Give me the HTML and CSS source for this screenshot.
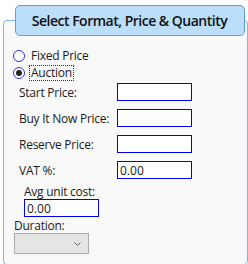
FILE: index.html
```html
<!DOCTYPE html>
<html lang="en">
<head>
    <meta charset="UTF-8">
    <title>Select Format</title>
    <link rel="stylesheet" href="styles.css">
</head>
<body>
    <fieldset class="group">
        <legend class="group-title">Select Format, Price &amp; Quantity</legend>

        <div class="formats">
            <label class="radio-row">
                <input type="radio" name="format" class="radio">
                <span class="radio-text">Fixed Price</span>
            </label>
            <label class="radio-row">
                <input type="radio" name="format" class="radio" checked>
                <span class="radio-text focused">Auction</span>
            </label>
        </div>

        <div class="prices">
            <div class="field">
                <span class="field-label">Start Price:</span>
                <input type="text" class="box">
            </div>
            <div class="field">
                <span class="field-label">Buy It Now Price:</span>
                <input type="text" class="box">
            </div>
            <div class="field">
                <span class="field-label">Reserve Price:</span>
                <input type="text" class="box">
            </div>
            <div class="field">
                <span class="field-label">VAT %:</span>
                <input type="text" class="box" value="0.00">
            </div>
        </div>

        <div class="avg">
            <div class="stack-label">Avg unit cost:</div>
            <input type="text" class="box" value="0.00">
        </div>

        <div class="duration">
            <div class="stack-label">Duration:</div>
            <div class="combo">
                <svg width="7" height="4" viewBox="0 0 7 4">
                    <path d="M0.5 0.5 L3.5 3.5 L6.5 0.5" fill="none" stroke="#606060" stroke-width="1"/>
                </svg>
            </div>
        </div>
    </fieldset>
</body>
</html>
```

FILE: styles.css
```css
body {
    margin: 0;
    padding: 5px 0 0 3px;
    background: #ffffff;
    font-family: "Open Sans", "Noto Sans", sans-serif;
    font-size: 12px;
    letter-spacing: -0.25px;
    color: #1b1b1b;
}
.group {
    margin: 0;
    padding: 0 0 10px 0;
    border: 1px solid #7fb6ec;
    border-radius: 4px;
    background: #f9f9f9;
}
.group-title {
    box-sizing: border-box;
    width: 230px;
    height: 31px;
    margin-left: 4px;
    padding: 0;
    border: 1px solid #5f9ddb;
    border-radius: 5px;
    background: #bbdefb;
    font-size: 14px;
    font-weight: 600;
    letter-spacing: -0.5px;
    line-height: 29px;
    text-align: center;
    color: #111;
}
.formats {
    margin-top: 11px;
    padding-left: 9px;
}
.radio-row {
    display: flex;
    align-items: center;
    gap: 4px;
    height: 17px;
}
.radio {
    appearance: none;
    box-sizing: border-box;
    width: 12px;
    height: 12px;
    margin: 0;
    border: 1px solid #2f2ff5;
    border-radius: 50%;
    background: #fff;
    display: flex;
    align-items: center;
    justify-content: center;
}
.radio:checked::after {
    content: "";
    width: 6px;
    height: 6px;
    border-radius: 50%;
    background: #222;
}
.radio-text {
    padding: 0 1px;
    line-height: 14px;
    border: 1px dotted transparent;
}
.radio-text.focused {
    border-color: #333;
}
.prices {
    margin-top: 2px;
    padding-left: 15px;
}
.field {
    display: flex;
    align-items: center;
    height: 18px;
    margin-bottom: 8px;
}
.field-label {
    width: 98px;
}
.box {
    box-sizing: border-box;
    width: 75px;
    height: 18px;
    margin: 0;
    padding: 0 2px;
    border: 1px solid #0000f0;
    background: #fff;
    font: inherit;
    color: #1b1b1b;
}
.avg {
    margin-top: -3px;
    padding-left: 20px;
}
.stack-label {
    height: 15px;
    line-height: 15px;
}
.duration {
    margin-top: 1px;
    padding-left: 10px;
}
.combo {
    box-sizing: border-box;
    width: 75px;
    height: 21px;
    border: 1px solid #acacac;
    background: #e5e5e5;
    display: flex;
    align-items: center;
    justify-content: flex-end;
    padding-right: 7px;
}
```
